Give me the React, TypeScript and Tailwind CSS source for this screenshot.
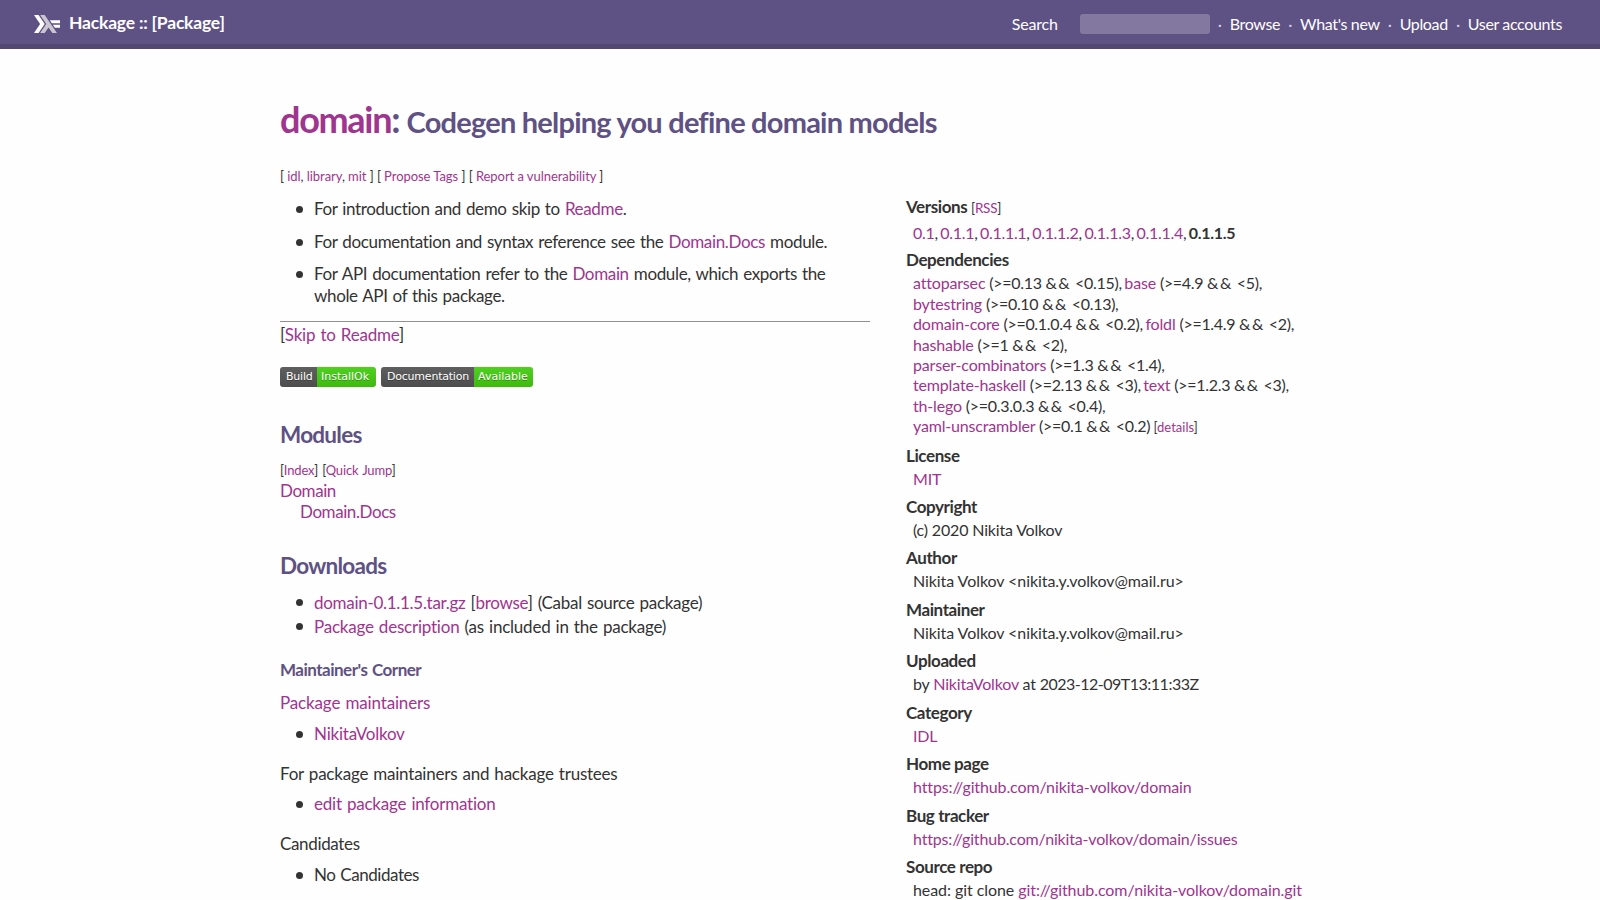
import React from "react";

type Dep = { name: string; min: string; max: string };

const navLinks = ["Browse", "What's new", "Upload", "User accounts"];

const oldVersions = ["0.1", "0.1.1", "0.1.1.1", "0.1.1.2", "0.1.1.3", "0.1.1.4"];

// One inner array per line of the dependency list
const dependencies: Dep[][] = [
  [
    { name: "attoparsec", min: "0.13", max: "0.15" },
    { name: "base", min: "4.9", max: "5" },
  ],
  [{ name: "bytestring", min: "0.10", max: "0.13" }],
  [
    { name: "domain-core", min: "0.1.0.4", max: "0.2" },
    { name: "foldl", min: "1.4.9", max: "2" },
  ],
  [{ name: "hashable", min: "1", max: "2" }],
  [{ name: "parser-combinators", min: "1.3", max: "1.4" }],
  [
    { name: "template-haskell", min: "2.13", max: "3" },
    { name: "text", min: "1.2.3", max: "3" },
  ],
  [{ name: "th-lego", min: "0.3.0.3", max: "0.4" }],
  [{ name: "yaml-unscrambler", min: "0.1", max: "0.2" }],
];

const A = ({ children }: { children: React.ReactNode }) => (
  <a href="#" className="text-[#9e358f]">{children}</a>
);

const Logo = () => (
  <svg viewBox="0 0 17 12" className="h-[18px] w-[26px]" preserveAspectRatio="none">
    <polygon points="0,12 4,6 0,0 3,0 7,6 3,12" fill="#fff" />
    <polygon points="4,12 8,6 4,0 7,0 15,12 12,12 9.5,8.25 7,12" fill="#c9c6cf" />
    <polygon points="13.66,8.5 12.33,6.5 17,6.5 17,8.5" fill="#fff" />
    <polygon points="11.66,5.5 10.33,3.5 17,3.5 17,5.5" fill="#fff" />
  </svg>
);

const Navbar = () => (
  <header className="flex h-[49px] items-center border-b-[5px] border-[#524673] bg-[#5e5184] pl-[34px] pr-[38px] pt-[3px] text-white">
    <a href="#" className="flex items-center gap-[9px]">
      <Logo />
      <span className="text-[17.5px] font-bold tracking-[-0.2px]">Hackage :: [Package]</span>
    </a>
    <div className="ml-auto flex items-center whitespace-nowrap text-[16px] tracking-[-0.35px]">
      <label htmlFor="q" className="pt-px tracking-[-0.2px]">Search</label>
      <input id="q" className="ml-[22px] mt-px h-5 w-[130px] rounded-[3px] bg-[#83789f] outline-none" />
      {navLinks.map((link) => (
        <React.Fragment key={link}>
          <span className="w-5 text-center text-[#d5d0e0]">·</span>
          <a href="#">{link}</a>
        </React.Fragment>
      ))}
    </div>
  </header>
);

const Badge = ({ label, value, left, right }: { label: string; value: string; left: string; right: string }) => (
  <span className="flex h-5 overflow-hidden rounded-[3px] font-['DejaVu_Sans',sans-serif] text-[11px] leading-5 text-white [text-shadow:0_1px_0_rgba(1,1,1,0.3)] [word-spacing:0]">
    <span className={`bg-linear-to-b from-[#5f5f5f] to-[#4d4d4d] pl-[6px] ${left}`}>{label}</span>
    <span className={`bg-linear-to-b from-[#4fd021] to-[#3fb90f] pl-1 tracking-normal ${right}`}>{value}</span>
  </span>
);

const Bullet = ({ children, className = "" }: { children: React.ReactNode; className?: string }) => (
  <li className={`flex ${className}`}>
    <span className="ml-4 mr-[11px] mt-[8px] size-[7px] shrink-0 rounded-full bg-[#333]" />
    <span className="whitespace-nowrap">{children}</span>
  </li>
);

const Property = ({
  title,
  className = "",
  children,
}: {
  title: string;
  className?: string;
  children: React.ReactNode;
}) => (
  <div className="mb-[7px]">
    <dt className="text-[17px] font-bold leading-[22px] tracking-[-0.4px]">{title}</dt>
    <dd className={`mt-[2px] pl-[7px] leading-[20.4px] ${className}`}>{children}</dd>
  </div>
);

const Range = ({ min, max }: { min: string; max: string }) => (
  <span className="tracking-[-0.3px]">
    (&gt;={min} <span className="tracking-[1.5px]">&amp;&amp;</span> &lt;{max})
  </span>
);

const MainColumn = () => (
  <main className="w-[590px] text-[17px] leading-[22px] tracking-[-0.22px] [word-spacing:1px]">
    <ul className="flex flex-col gap-[10.5px] tracking-[-0.35px]">
      <Bullet>For introduction and demo skip to <A>Readme</A>.</Bullet>
      <Bullet>For documentation and syntax reference see the <A>Domain.Docs</A> module.</Bullet>
      <Bullet>
        For API documentation refer to the <A>Domain</A> module, which exports the
        <br />
        whole API of this package.
      </Bullet>
    </ul>
    <hr className="mt-[14px] border-t border-[#919191]" />
    <p className="mt-[2px]">[<A>Skip to Readme</A>]</p>

    <div className="mt-[21px] flex gap-[5px]">
      <Badge label="Build" value="InstallOk" left="w-[37px]" right="w-[59px]" />
      <Badge label="Documentation" value="Available" left="w-[93px]" right="w-[59px]" />
    </div>

    <h2 className="mt-[34px] text-[22.5px] font-bold leading-7 tracking-[-0.75px] text-[#5e5184]">Modules</h2>
    <p className="mt-[11px] text-[13px] leading-5 tracking-[-0.15px]">[<A>Index</A>] [<A>Quick Jump</A>]</p>
    <div className="leading-[21px] tracking-[-0.42px]">
      <p><A>Domain</A></p>
      <p className="pl-5"><A>Domain.Docs</A></p>
    </div>

    <h2 className="mt-[30px] text-[22.5px] font-bold leading-7 tracking-[-0.75px] text-[#5e5184]">Downloads</h2>
    <ul className="mt-[11px] leading-6">
      <Bullet className="tracking-[-0.29px]">
        <A>domain-0.1.1.5.tar.gz</A> [<A>browse</A>] (Cabal source package)
      </Bullet>
      <Bullet><A>Package description</A> (as included in the package)</Bullet>
    </ul>

    <h4 className="mt-[19px] font-bold leading-6 tracking-[-0.5px] text-[#5e5184]">Maintainer's Corner</h4>
    <p className="mt-[10px] tracking-[-0.15px]"><A>Package maintainers</A></p>
    <ul className="mt-[9px]">
      <Bullet><A>NikitaVolkov</A></Bullet>
    </ul>
    <p className="mt-[18px]">For package maintainers and hackage trustees</p>
    <ul className="mt-2">
      <Bullet><A>edit package information</A></Bullet>
    </ul>
    <p className="mt-[18px] tracking-[-0.35px]">Candidates</p>
    <ul className="mt-[9px] tracking-[-0.45px]">
      <Bullet>No Candidates</Bullet>
    </ul>
  </main>
);

const Properties = () => (
  <aside className="-mt-[2px] w-[414px] whitespace-nowrap text-[16px] tracking-[-0.17px]">
    <dl>
      <dt className="text-[17px] font-bold leading-[22px] tracking-[-0.4px]">
        Versions <span className="text-[13.5px] font-normal tracking-[-0.25px]">[<A>RSS</A>]</span>
      </dt>
      <dd className="mb-[6px] mt-[4px] pl-[7px] leading-[20.4px] tracking-[-0.3px] [word-spacing:-1.3px]">
        {oldVersions.map((v) => (
          <React.Fragment key={v}><A>{v}</A>, </React.Fragment>
        ))}
        <strong>0.1.1.5</strong>
      </dd>

      <Property title="Dependencies">
        {dependencies.map((line, i) => (
          <div key={i}>
            {line.map((dep, j) => (
              <React.Fragment key={dep.name}>
                {j > 0 && <span className="[word-spacing:-1.5px]"> </span>}
                <A>{dep.name}</A> <Range min={dep.min} max={dep.max} />
                {i < dependencies.length - 1 && ","}
              </React.Fragment>
            ))}
            {i === dependencies.length - 1 && (
              <span className="text-[13px] tracking-normal"> [<A>details</A>]</span>
            )}
          </div>
        ))}
      </Property>
      <Property title="License"><A>MIT</A></Property>
      <Property title="Copyright">(c) 2020 Nikita Volkov</Property>
      <Property title="Author" className="tracking-[-0.07px]">Nikita Volkov &lt;nikita.y.volkov@mail.ru&gt;</Property>
      <Property title="Maintainer" className="tracking-[-0.07px]">Nikita Volkov &lt;nikita.y.volkov@mail.ru&gt;</Property>
      <Property title="Uploaded">
        by <A>NikitaVolkov</A> at <span className="tracking-[-0.5px]">2023-12-09T13:11:33Z</span>
      </Property>
      <Property title="Category"><A>IDL</A></Property>
      <Property title="Home page" className="tracking-[-0.12px]"><A>https://github.com/nikita-volkov/domain</A></Property>
      <Property title="Bug tracker"><A>https://github.com/nikita-volkov/domain/issues</A></Property>
      <Property title="Source repo" className="tracking-[-0.07px]">
        head: git clone <A>git://github.com/nikita-volkov/domain.git</A>
      </Property>
    </dl>
  </aside>
);

export default function App() {
  return (
    <div className="h-[900px] overflow-hidden bg-[#fefefe] font-[Lato,sans-serif] text-[#333]">
      <Navbar />
      <div className="mx-auto w-[1040px]">
        <h1 className="mt-[48px] whitespace-nowrap text-[36px] font-bold leading-[44px] tracking-[-1.3px] text-[#5e5184]">
          <A>domain</A>: <small className="text-[29px] tracking-[-0.78px]">Codegen helping you define domain models</small>
        </h1>
        <div className="mt-[22px] text-[13px] leading-5 tracking-[-0.05px]">
          [ <A>idl</A>, <A>library</A>, <A>mit</A> ] [ <A>Propose Tags</A> ] [ <A>Report a vulnerability</A> ]
        </div>
        <div className="mt-3 flex gap-9">
          <MainColumn />
          <Properties />
        </div>
      </div>
    </div>
  );
}
